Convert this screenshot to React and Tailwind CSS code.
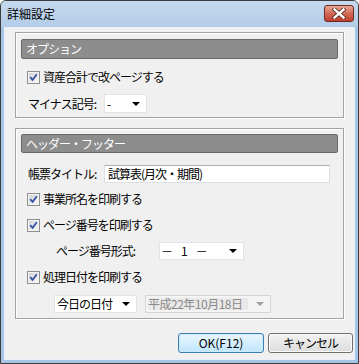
const F = "[font-family:'Noto_Sans_CJK_JP','Liberation_Sans',sans-serif]";

function Check() {
  return (
    <span className="w-[13px] h-[13px] border border-[#8e8f8f] bg-white flex items-center justify-center shrink-0">
      <span className="w-[11px] h-[11px] border border-[#f4f4f4] bg-gradient-to-br from-[#d4d4d4] to-[#f7f7f7] flex items-center justify-center">
        <svg width="9" height="9" viewBox="0 0 9 9">
          <path d="M1.2 4.2 L3.6 6.8 L7.8 1.2" fill="none" stroke="#2f4fa6" strokeWidth="1.7" />
        </svg>
      </span>
    </span>
  );
}

function Arrow({ color = "#000" }) {
  return (
    <svg width="8" height="4" viewBox="0 0 8 4" className="shrink-0">
      <path d="M0 0 H8 L4 4 Z" fill={color} />
    </svg>
  );
}

function CheckRow({ children, className = "" }) {
  return (
    <div className={"h-[20px] flex items-center ml-[6px] gap-[3px] " + className}>
      <Check />
      <span>{children}</span>
    </div>
  );
}

export default function App() {
  return (
    <div className={"w-[359px] h-[364px] bg-[#a6c5e7] border border-[#3c3c3c] rounded-t-[6px] flex flex-col text-[12px] leading-none tracking-[-1px] text-black " + F}>
      {/* title bar */}
      <div className="h-[26px] shrink-0 rounded-t-[5px] bg-gradient-to-b from-[#c6d9ee] to-[#b3cce8] flex items-start justify-between">
        <div className="pl-[6px] pt-[7px] tracking-normal">詳細設定</div>
        <div className="mt-[4px] mr-[4px] w-[30px] h-[17px] rounded-[3px] border border-[#6b2a22] bg-gradient-to-b from-[#e6a796] via-[#d06a56] to-[#c13d2a] flex items-center justify-center">
          <svg width="14" height="11" viewBox="0 0 14 11">
            <path d="M2.5 1.5 L11.5 9.5 M11.5 1.5 L2.5 9.5" stroke="#5b2b25" strokeWidth="4.2" strokeLinecap="square" />
            <path d="M2.5 1.5 L11.5 9.5 M11.5 1.5 L2.5 9.5" stroke="#ffffff" strokeWidth="2.4" strokeLinecap="square" />
          </svg>
        </div>
      </div>

      {/* client */}
      <div className="flex-1 mx-[3px] mb-[3px] border border-[#e8f1fa] bg-[#f0f0f0] flex flex-col">
        <div className="px-[10px] pt-[4px] flex flex-col">
          {/* group 1 */}
          <div className="border border-[#a3a3a3] shadow-[inset_1px_1px_0_#ffffff,1px_1px_0_#ffffff] px-[5px] pt-[6px] pb-[4px] flex flex-col">
            <div className="h-[20px] bg-[#8d8d8d] border border-[#686868] rounded-[2px] text-white pl-[4px] flex items-center">オプション</div>
            <CheckRow className="mt-[8px]">資産合計で改ページする</CheckRow>
            <div className="h-[19px] mt-[7px] flex items-center ml-[7px]">
              <span className="w-[76px]">マイナス記号:</span>
              <div className="w-[43px] h-[19px] bg-white border border-[#e2e3ea] flex items-center justify-between pl-[2px] pr-[6px]">
                <span>-</span>
                <Arrow />
              </div>
            </div>
          </div>

          {/* group 2 */}
          <div className="mt-[10px] border border-[#a3a3a3] shadow-[inset_1px_1px_0_#ffffff,1px_1px_0_#ffffff] px-[5px] pt-[5px] pb-[5px] flex flex-col">
            <div className="h-[19px] bg-[#8d8d8d] border border-[#686868] rounded-[2px] text-white pl-[4px] flex items-center">ヘッダー・フッター</div>
            <div className="h-[18px] mt-[12px] flex items-center ml-[7px]">
              <span className="w-[76px]">帳票タイトル:</span>
              <div className="w-[226px] h-[18px] bg-white border border-[#dbdfe6] border-t-[#abadb3] flex items-center pl-[3px]">
                試算表(月次・期間)
              </div>
            </div>
            <CheckRow className="mt-[6px]">事業所名を印刷する</CheckRow>
            <CheckRow className="mt-[6px]">ページ番号を印刷する</CheckRow>
            <div className="h-[18px] mt-[7px] flex items-center ml-[35px]">
              <span className="w-[103px]">ページ番号形式:</span>
              <div className="w-[85px] h-[18px] bg-white border border-[#e2e3ea] flex items-center justify-between pl-[1px] pr-[6px] tracking-normal">
                <span className="flex items-center gap-[8px]">
                  <span>－</span>
                  <span>1</span>
                  <span>－</span>
                </span>
                <Arrow />
              </div>
            </div>
            <CheckRow className="mt-[7px]">処理日付を印刷する</CheckRow>
            <div className="h-[18px] mt-[8px] flex items-center ml-[33px] gap-[8px]">
              <div className="w-[83px] h-[18px] bg-white border border-[#e2e3ea] flex items-center justify-between pl-[2px] pr-[6px]">
                <span>今日の日付</span>
                <Arrow />
              </div>
              <div className="w-[126px] h-[18px] bg-[#f4f4f4] border border-[#d5d5d5] flex items-center justify-between pl-[2px] pr-[6px] text-[#8a8a8a] tracking-[-0.5px]">
                <span className="bg-[#e9e9e9] pr-[6px]">平成22年10月18日</span>
                <Arrow color="#a0a0a0" />
              </div>
            </div>
          </div>
        </div>

        {/* buttons */}
        <div className="mt-[14px] flex justify-end gap-[4px] pr-[1px] tracking-normal">
          <div className="w-[86px] h-[20px] rounded-[3px] border border-[#3c7fb1] bg-gradient-to-b from-[#eaf6fd] to-[#bee6fd] shadow-[inset_0_0_0_1px_#cdeafa] flex items-center justify-center">
            OK(F12)
          </div>
          <div className="w-[85px] h-[20px] rounded-[3px] border border-[#707070] bg-gradient-to-b from-[#f2f2f2] to-[#dddddd] shadow-[inset_0_0_0_1px_#fcfcfc] flex items-center justify-center tracking-[-1px]">
            キャンセル
          </div>
        </div>
      </div>
    </div>
  );
}
